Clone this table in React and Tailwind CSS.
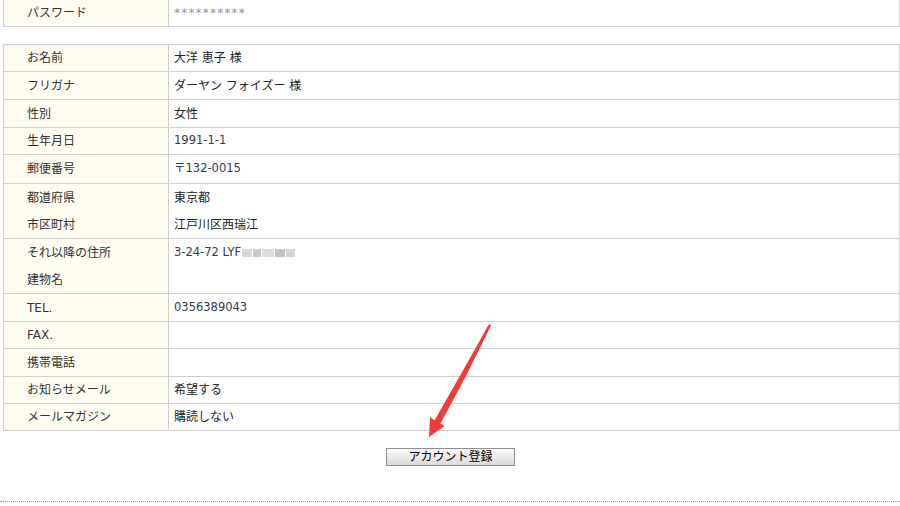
const rows = [
  { h: 'h-[27px]', label: ['お名前'], value: ['大洋 恵子 様'] },
  { h: 'h-[28px]', label: ['フリガナ'], value: ['ダーヤン フォイズー 様'] },
  { h: 'h-[28px]', label: ['性別'], value: ['女性'] },
  { h: 'h-[27px]', label: ['生年月日'], value: ['1991-1-1'], num: true },
  { h: 'h-[29px]', label: ['郵便番号'], value: ['〒132-0015'], num: true },
  { h: 'h-[55px]', label: ['都道府県', '市区町村'], value: ['東京都', '江戸川区西瑞江'] },
  { h: 'h-[55px]', label: ['それ以降の住所', '建物名'], value: ['3-24-72 LYF'], blur: true, num: true },
  { h: 'h-[28px]', label: ['TEL.'], value: ['0356389043'], num: true },
  { h: 'h-[27px]', label: ['FAX.'], value: [] },
  { h: 'h-[28px]', label: ['携帯電話'], value: [] },
  { h: 'h-[27px]', label: ['お知らせメール'], value: ['希望する'] },
  { h: 'h-[26px]', label: ['メールマガジン'], value: ['購読しない'], last: true },
];

function Row({ row }) {
  const multi = row.label.length > 1;
  return (
    <div
      className={`grid grid-cols-[165px_1fr] grid-rows-[minmax(0,1fr)] overflow-hidden ${row.h} ${row.last ? '' : 'border-b border-[#cfcfcf]'}`}
    >
      <div className="bg-[#fffdf0] border-r border-[#cfcfcf] pl-[23px] flex flex-col justify-center min-h-0">
        {row.label.map((t) => (
          <div key={t} className={`${multi ? 'h-[27px]' : ''} flex items-center text-[#333]`}>
            {t}
          </div>
        ))}
      </div>
      <div className={`pl-[5px] flex flex-col min-h-0 ${multi ? 'justify-start' : 'justify-center'}`}>
        {row.value.map((t) => (
          <div
            key={t}
            className={`${multi ? 'h-[27px]' : ''} flex items-center ${row.num ? 'text-[#2f3a4e] text-[11.5px]' : 'text-[#222]'}`}
          >
            {t}
            {row.blur && (
              <span className="ml-[1px] inline-flex h-[8px] gap-[1px]">
                <span className="w-[10px] bg-[#d8d8d8]" />
                <span className="w-[8px] bg-[#c8c8c8]" />
                <span className="w-[12px] bg-[#dcdcdc]" />
                <span className="w-[10px] bg-[#c4c4c4]" />
                <span className="w-[9px] bg-[#d4d4d4]" />
              </span>
            )}
          </div>
        ))}
      </div>
    </div>
  );
}

export default function App() {
  return (
    <div
      className="relative w-[900px] h-[506px] overflow-hidden bg-white text-[12px]"
      style={{ fontFamily: '"DejaVu Sans", "Noto Sans CJK JP", sans-serif' }}
    >
      <div className="ml-[3px] w-[897px] -mt-[2px] border border-[#cfcfcf]">
        <div className="grid grid-cols-[165px_1fr] h-[27px]">
          <div className="bg-[#fffdf0] border-r border-[#cfcfcf] pl-[23px] flex items-center text-[#333]">
            パスワード
          </div>
          <div className="pl-[5px] flex items-center text-[#8d93a6] text-[12px] tracking-[1.2px]">
            **********
          </div>
        </div>
      </div>

      <div className="ml-[3px] w-[897px] mt-[17px] border border-[#cfcfcf]">
        {rows.map((row, i) => (
          <Row key={i} row={row} />
        ))}
      </div>

      <div className="flex justify-center mt-[17px] pl-[1px]">
        <button className="w-[129px] h-[18px] border border-[#8e8e8e] bg-gradient-to-b from-[#fafafa] to-[#dadada] text-[12px] text-black leading-none">
          アカウント登録
        </button>
      </div>

      <div className="mt-[35px] border-t border-dotted border-[#9a9a9a]" />

      <svg
        className="absolute left-0 top-0 pointer-events-none"
        width="900"
        height="506"
        viewBox="0 0 900 506"
      >
        <polygon
          points="429,437 430,417 434.5,420.5 461,374 489,324 491,325.5 466,376 440.5,423.5 444.5,426"
          fill="#f23a3a"
        />
      </svg>
    </div>
  );
}
